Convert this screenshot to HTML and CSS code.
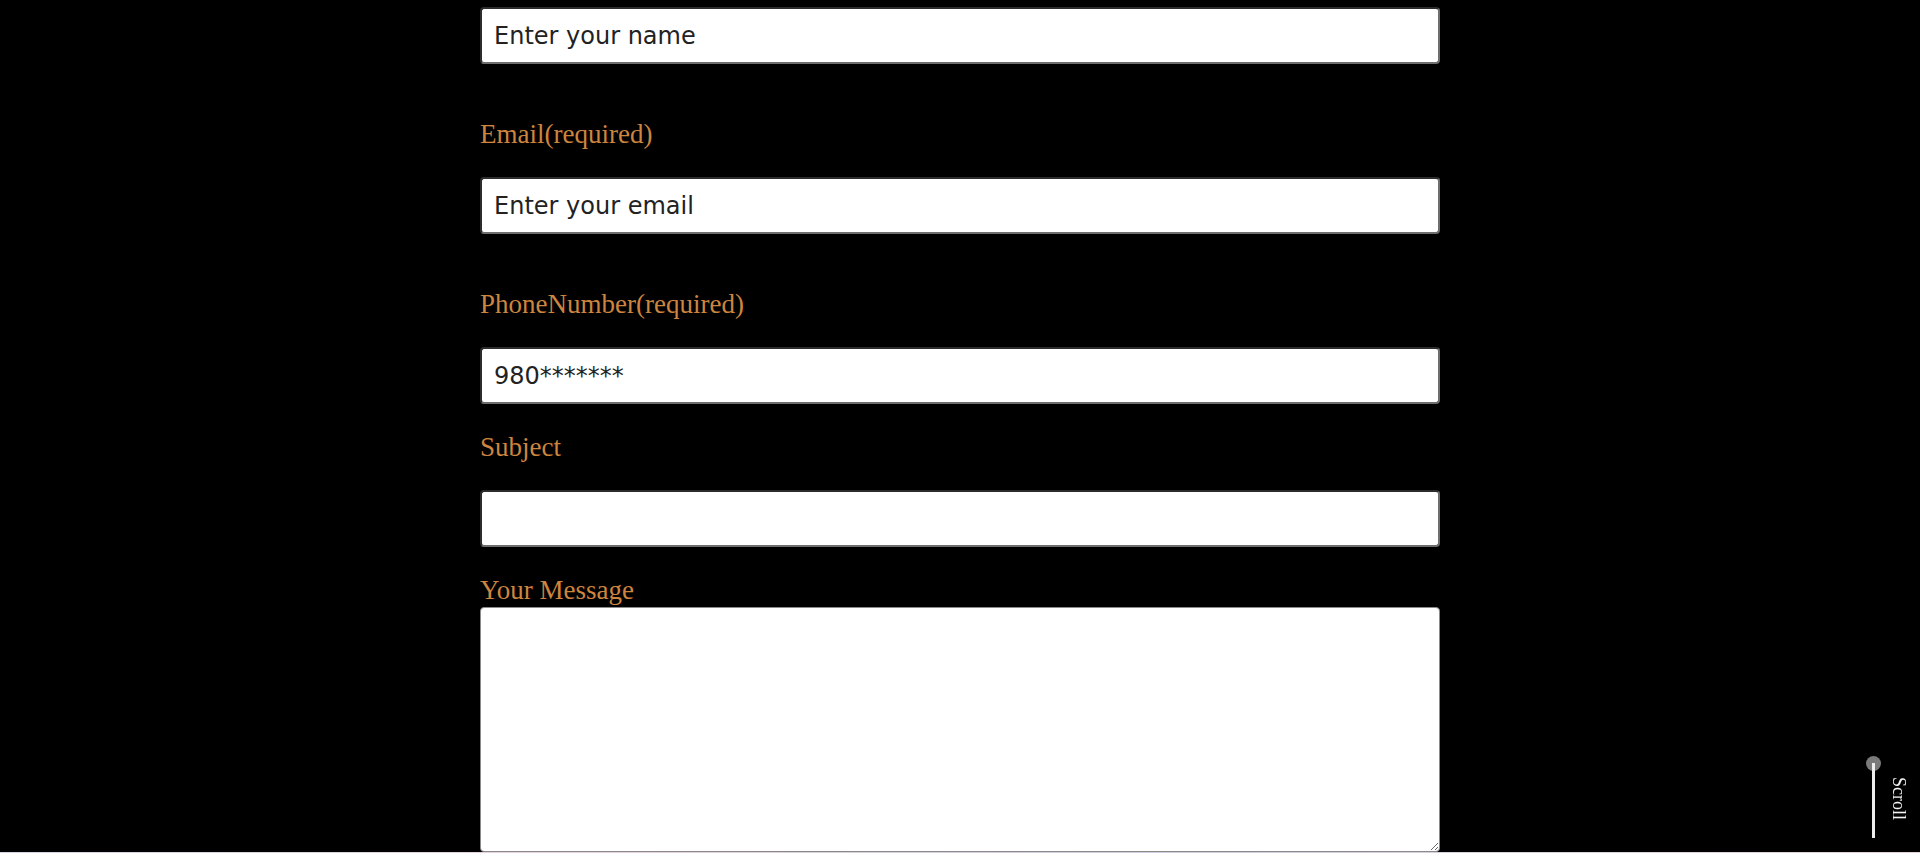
FILE: index.html
```html
<!DOCTYPE html>
<html lang="en">
<head>
<meta charset="utf-8">
<title>Contact</title>
<link rel="stylesheet" href="styles.css">
</head>
<body>
<main class="page">
  <form class="contact-form">
    <input class="field first" type="text" placeholder="Enter your name">
    <label class="label gap-lg">Email(required)</label>
    <input class="field" type="email" placeholder="Enter your email">
    <label class="label gap-lg">PhoneNumber(required)</label>
    <input class="field" type="tel" placeholder="980*******">
    <label class="label gap-md">Subject</label>
    <input class="field" type="text">
    <label class="label gap-sm">Your Message</label>
    <textarea class="message"></textarea>
  </form>
  <div class="bottom-strip"></div>
</main>
<div class="scroll-indicator">
  <span class="scroll-dot"></span>
  <span class="scroll-line"></span>
  <span class="scroll-text">Scroll</span>
</div>
</body>
</html>
```

FILE: styles.css
```css
html, body {
  margin: 0;
  padding: 0;
  background: #000;
  overflow: hidden;
}

.page {
  display: flex;
  flex-direction: column;
  height: 853px;
}

.contact-form {
  width: 960px;
  margin: 0 auto;
  padding-top: 7px;
  display: flex;
  flex-direction: column;
  flex: 1;
}

.field {
  box-sizing: border-box;
  width: 960px;
  height: 57px;
  margin: 27px 0 0;
  padding: 0 12px;
  background: #fff;
  border-style: solid;
  border-width: 2px;
  border-color: #2c2c2c #6e6e6e #6e6e6e #2c2c2c;
  border-radius: 4px;
  font-family: "DejaVu Sans", Verdana, sans-serif;
  font-size: 24px;
  color: #1e1e1e;
  outline: none;
}

.field.first {
  margin-top: 0;
}

.field::placeholder {
  color: #222;
  opacity: 1;
}

.label {
  display: block;
  padding-top: 1px;
  font-family: "Liberation Serif", "Times New Roman", serif;
  font-size: 27px;
  line-height: 31px;
  color: #cd853f;
}

.gap-lg { margin-top: 54px; }
.gap-md { margin-top: 27px; }
.gap-sm { margin-top: 27px; }

.message {
  box-sizing: border-box;
  display: block;
  width: 960px;
  height: 245px;
  margin: 1px 0 0;
  padding: 8px;
  background: #fff;
  border: 1px solid #8a8a8a;
  border-radius: 4px;
  font-family: "DejaVu Sans", Verdana, sans-serif;
  font-size: 16px;
  resize: vertical;
  outline: none;
}

.bottom-strip {
  height: 1px;
  background: linear-gradient(90deg, #d6d2e4 0%, #e6d2dc 30%, #d0cee2 60%, #e4d2d8 100%);
}

.scroll-indicator {
  position: fixed;
  left: 1866px;
  top: 756px;
  width: 44px;
  height: 84px;
}

.scroll-dot {
  position: absolute;
  left: 0;
  top: 0;
  width: 15px;
  height: 15px;
  border-radius: 50%;
  background: #7a7a7a;
}

.scroll-line {
  position: absolute;
  left: 6px;
  top: 7px;
  width: 3px;
  height: 75px;
  background: #eeeeee;
}

.scroll-text {
  position: absolute;
  left: 24px;
  top: 21px;
  writing-mode: vertical-rl;
  font-family: "Liberation Serif", "Times New Roman", serif;
  font-size: 18px;
  line-height: 18px;
  color: #f2f2f2;
}
```
